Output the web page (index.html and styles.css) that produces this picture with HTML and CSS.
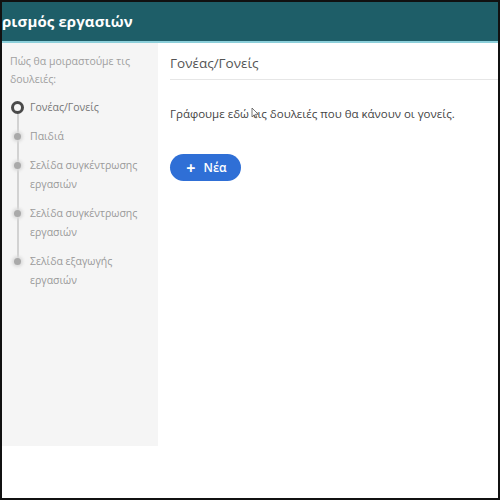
FILE: index.html
```html
<!DOCTYPE html>
<html lang="el">
<head>
<meta charset="utf-8">
<link rel="stylesheet" href="styles.css">
</head>
<body>
<div class="frame">
  <header class="topbar">
    <h1 class="title">ρισμός εργασιών</h1>
  </header>
  <div class="content">
    <aside class="sidebar">
      <p class="intro">Πώς θα μοιραστούμε τις δουλειές:</p>
      <ol class="steps">
        <li class="step active"><span class="dot"></span><span class="label">Γονέας/Γονείς</span></li>
        <li class="step"><span class="dot"></span><span class="label">Παιδιά</span></li>
        <li class="step"><span class="dot"></span><span class="label">Σελίδα συγκέντρωσης εργασιών</span></li>
        <li class="step"><span class="dot"></span><span class="label">Σελίδα συγκέντρωσης εργασιών</span></li>
        <li class="step last"><span class="dot"></span><span class="label">Σελίδα εξαγωγής εργασιών</span></li>
      </ol>
    </aside>
    <main class="main">
      <h2 class="section-title">Γονέας/Γονείς</h2>
      <p class="desc">Γράφουμε εδώ <span class="cursor-wrap">τις<svg class="cursor" viewBox="0 0 8 12" width="8" height="12"><path d="M1 1 L1 10 L3.2 7.8 L4.8 11 L6 10.4 L4.5 7.3 L7.3 7.3 Z" fill="#fff" stroke="#555" stroke-width="0.8" stroke-linejoin="round"/></svg></span> δουλειές που θα κάνουν οι γονείς.</p>
      <button class="btn-new"><span class="plus">+</span>Νέα</button>
    </main>
  </div>
</div>
</body>
</html>
```
FILE: styles.css
```css
* { box-sizing: border-box; }
html, body { margin: 0; padding: 0; }
body {
  font-family: "Open Sans", "Noto Sans", sans-serif;
  background: #fff;
}
.frame {
  width: 500px;
  height: 500px;
  border: 2px solid #111;
  display: flex;
  flex-direction: column;
  overflow: hidden;
}
.topbar {
  height: 41px;
  flex: none;
  background: #1e5e68;
  border-bottom: 2px solid #8ccfda;
  display: flex;
  align-items: center;
}
.title {
  margin: 0 0 2px 0;
  color: #fff;
  font-size: 15px;
  font-weight: 700;
  letter-spacing: 0.1px;
  white-space: nowrap;
}
.content {
  flex: 1;
  display: flex;
  align-items: flex-start;
}
.sidebar {
  width: 156px;
  flex: none;
  height: 403px;
  background: #f5f5f5;
  padding: 9px 8px 0 8px;
}
.intro {
  margin: 0 0 10px 0;
  font-size: 10.5px;
  line-height: 18px;
  color: #a0a0a0;
}
.steps {
  list-style: none;
  margin: 0;
  padding: 0;
}
.step {
  position: relative;
  display: flex;
  align-items: flex-start;
  padding-left: 20px;
  padding-bottom: 10px;
  font-size: 10.5px;
  line-height: 19px;
  color: #9a9a9a;
}
.step::before {
  content: "";
  position: absolute;
  left: 7px;
  top: 10px;
  bottom: -10px;
  width: 1.5px;
  background: #d2d2d2;
}
.step.last::before { display: none; }
.dot {
  position: absolute;
  left: 4px;
  top: 6px;
  width: 7px;
  height: 7px;
  border-radius: 50%;
  background: #a9a9a9;
  box-shadow: 0 0 3px 2px #dcdcdc;
}
.step.active .dot {
  left: 1px;
  top: 3px;
  width: 13px;
  height: 13px;
  background: #f5f5f5;
  border: 3.5px solid #4a4a4a;
  box-shadow: none;
}
.step.active .label { color: #777; }
.label { display: block; }
.main {
  flex: 1;
  padding: 10px 0 0 12px;
}
.section-title {
  margin: 0;
  padding-bottom: 6px;
  border-bottom: 1px solid #e6e6e6;
  font-size: 13.5px;
  font-weight: 400;
  line-height: 20px;
  color: #555;
}
.desc {
  margin: 24px 0 0 0;
  font-size: 11.5px;
  line-height: 20px;
  color: #444;
}
.cursor-wrap { position: relative; }
.cursor {
  position: absolute;
  left: -1px;
  top: 1px;
}
.btn-new {
  margin-top: 30px;
  width: 71px;
  height: 27px;
  border: none;
  border-radius: 14px;
  background: #2f6fd6;
  color: #fff;
  font-family: inherit;
  font-size: 12px;
  font-weight: 600;
  display: flex;
  align-items: center;
  justify-content: center;
  gap: 8px;
  padding: 0 0 0 2px;
}
.plus {
  font-size: 16px;
  line-height: 1;
  font-weight: 700;
}
```
